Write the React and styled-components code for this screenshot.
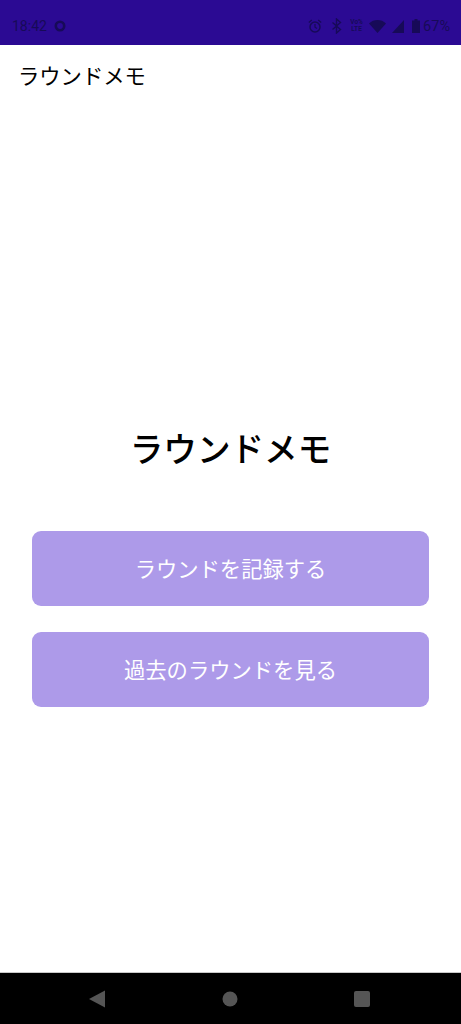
import React from 'react'
import styled, { createGlobalStyle } from 'styled-components'

const GlobalStyle = createGlobalStyle`
    html, body {
        margin: 0;
        padding: 0;
        background: #fff;
        font-family: "Noto Sans CJK JP", "Noto Sans", sans-serif;
    }
`

const Screen = styled.div`
    width: 461px;
    height: 1024px;
    display: flex;
    flex-direction: column;
    overflow: hidden;
`

const StatusBar = styled.div`
    height: 45px;
    flex: none;
    box-sizing: border-box;
    padding: 7px 11px 0 12px;
    background: #2b0a93;
    color: #170a58;
    display: flex;
    align-items: center;
    justify-content: space-between;
    font-family: "Roboto", sans-serif;
`

const StatusGroup = styled.div`
    display: flex;
    align-items: center;
`

const Clock = styled.span`
    font-size: 14px;
    width: 42px;
`

const Percent = styled.span`
    font-size: 14.5px;
    margin-left: 3px;
`

const Network = styled.span`
    display: flex;
    flex-direction: column;
    width: 15px;
    margin-left: 7px;
    font-size: 6.5px;
    line-height: 7px;
    font-weight: 700;
    text-align: center;
`

const AppBar = styled.div`
    height: 58px;
    flex: none;
    box-sizing: border-box;
    padding: 0 0 0 18px;
    display: flex;
    align-items: center;
    font-size: 21.3px;
    color: #000;
    background: #fff;
`

const Content = styled.main`
    flex: 1;
    box-sizing: border-box;
    padding: 55px 32px 0 32px;
    display: flex;
    flex-direction: column;
    justify-content: center;
    background: #fff;
`

const Title = styled.h1`
    margin: 0 0 59px;
    text-align: center;
    font-size: 33.6px;
    line-height: 48px;
    font-weight: 500;
    color: #000;
`

const ButtonList = styled.div`
    display: flex;
    flex-direction: column;
    gap: 26px;
`

const MenuButton = styled.button`
    height: 75px;
    padding: 0 0 2px;
    border: none;
    border-radius: 9px;
    background: #ad9ae9;
    color: #fff;
    font-family: inherit;
    font-size: 21.3px;
`

const NavBar = styled.nav`
    height: 52px;
    flex: none;
    background: #000;
    border-top: 1px solid #c9c9c9;
    box-sizing: border-box;
    padding: 0 91px 0 89px;
    display: flex;
    align-items: center;
    justify-content: space-between;
`

const NavIcon = styled.svg`
    width: 16px;
    height: 18px;
    fill: #555;
`

const BarIcon = styled.svg`
    width: ${props => props.$w}px;
    height: 16px;
    margin-left: ${props => props.$ml || 0}px;
    fill: currentColor;
`

const App = () => {
    return (
        <Screen>
            <GlobalStyle />

            <StatusBar>
                <StatusGroup>
                    <Clock>18:42</Clock>
                    <BarIcon $w={12} viewBox="0 0 12 16">
                        <circle cx="6" cy="8" r="4.2" fill="none" stroke="currentColor" strokeWidth="2.6" />
                    </BarIcon>
                </StatusGroup>

                <StatusGroup>
                    <BarIcon $w={14} viewBox="0 0 14 16">
                        <circle cx="7" cy="9" r="5" fill="none" stroke="currentColor" strokeWidth="1.5" />
                        <path d="M7 6v3.200l2 1.300M.8 4.500l3-2.600M13.200 4.500l-3-2.600" fill="none" stroke="currentColor" strokeWidth="1.3" />
                    </BarIcon>
                    <BarIcon $w={11} $ml={9} viewBox="0 0 11 16">
                        <path d="M1.500 4.500l8 7-4 3.500V1l4 3.500-8 7" fill="none" stroke="currentColor" strokeWidth="1.4" />
                    </BarIcon>
                    <Network>
                        <span>Vo%</span>
                        <span>LTE</span>
                    </Network>
                    <BarIcon $w={17} $ml={5} viewBox="0 0 17 16">
                        <path d="M0 5.500C2.400 3 5.300 2 8.500 2s6.100 1 8.500 3.500L8.500 15z" />
                    </BarIcon>
                    <BarIcon $w={12} $ml={6} viewBox="0 0 12 16">
                        <path d="M12 2v13H0z" />
                    </BarIcon>
                    <BarIcon $w={8} $ml={8} viewBox="0 0 8 16">
                        <path d="M2.500 1h3v1.500H8V15H0V2.500h2.500z" />
                    </BarIcon>
                    <Percent>67%</Percent>
                </StatusGroup>
            </StatusBar>

            <AppBar>ラウンドメモ</AppBar>

            <Content>
                <Title>ラウンドメモ</Title>

                <ButtonList>
                    <MenuButton>ラウンドを記録する</MenuButton>
                    <MenuButton>過去のラウンドを見る</MenuButton>
                </ButtonList>
            </Content>

            <NavBar>
                <NavIcon viewBox="0 0 16 18">
                    <path d="M16 .5v17L0 9z" />
                </NavIcon>
                <NavIcon viewBox="0 0 16 18">
                    <circle cx="8" cy="9" r="7.500" />
                </NavIcon>
                <NavIcon viewBox="0 0 16 18">
                    <rect x="0" y="1" width="16" height="16" rx="2" />
                </NavIcon>
            </NavBar>
        </Screen>
    )
}

export default App
